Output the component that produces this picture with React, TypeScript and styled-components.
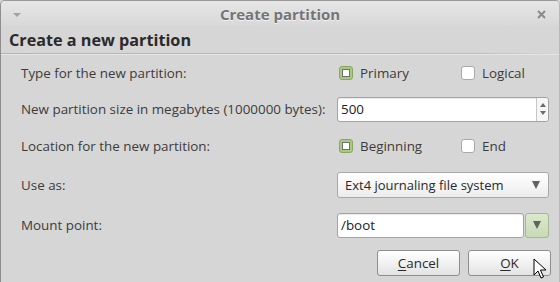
import React from 'react';
import styled, { createGlobalStyle } from 'styled-components';

const GlobalStyle = createGlobalStyle`
  html, body {
    margin: 0;
    padding: 0;
    background: #d6d6d6;
  }
  body {
    font-family: 'Open Sans', 'DejaVu Sans', sans-serif;
  }
`;

const Window = styled.div`
  position: relative;
  width: 560px;
  height: 282px;
  box-sizing: border-box;
  background: #d6d6d6;
  border-left: 1px solid #8e8e8e;
  border-top: 1px solid #9a9a9a;
  border-right: 1px solid #b8b8b8;
  border-radius: 5px 5px 0 0;
  display: flex;
  flex-direction: column;
  overflow: hidden;
  color: #3c3c3c;
  font-size: 13px;
`;

const TitleBar = styled.div`
  height: 25px;
  flex: none;
  display: flex;
  align-items: center;
  padding: 0 12px 0 12px;
  background: linear-gradient(#e6e6e6, #d8d8d8);
`;

const MenuArrow = styled.span`
  width: 0;
  height: 0;
  margin-top: 3px;
  border-left: 4px solid transparent;
  border-right: 4px solid transparent;
  border-top: 4px solid #a2a2a2;
`;

const Title = styled.div`
  flex: 1;
  text-align: center;
  font-weight: bold;
  font-size: 15px;
  color: #747474;
  text-shadow: 0 1px 0 #f4f4f4;
  padding-left: 2px;
`;

const CloseIcon = styled.svg`
  margin-right: 1px;
  margin-top: 1px;
`;

const Heading = styled.div`
  padding: 3px 0 0 8px;
  height: 24px;
  font-size: 16.2px;
  font-weight: bold;
  color: #2a2a2a;
`;

const Separator = styled.div`
  height: 1px;
  background: linear-gradient(90deg, #b4b4b4, #bdbdbd 85%, #d6d6d6);
  border-bottom: 1px solid #e6e6e6;
`;

const Form = styled.div`
  display: grid;
  grid-template-columns: 316px 212px;
  padding-left: 20px;
`;

const Label = styled.div<{ $h: number }>`
  height: ${({ $h }) => $h}px;
  display: flex;
  align-items: center;
  white-space: nowrap;
  font-size: 13.4px;
`;

const Cell = styled.div<{ $h: number }>`
  height: ${({ $h }) => $h}px;
  display: flex;
  align-items: center;
`;

const RadioGroup = styled.div`
  display: flex;
  align-items: center;
  padding-left: 2px;
`;

const Option = styled.label`
  display: flex;
  align-items: center;
  gap: 7px;
  width: 122px;
  font-size: 13.4px;
`;

const Check = styled.span<{ $on?: boolean }>`
  width: 14px;
  height: 14px;
  box-sizing: border-box;
  border-radius: 3px;
  border: 1px solid ${({ $on }) => ($on ? '#87a85f' : '#a9a9a9')};
  background: ${({ $on }) => ($on ? '#a9c983' : '#ffffff')};
  display: flex;
  align-items: center;
  justify-content: center;
  &::after {
    content: '';
    display: ${({ $on }) => ($on ? 'block' : 'none')};
    width: 6px;
    height: 6px;
    background: #fff;
    border: 1px solid #6f6f6f;
  }
`;

const Entry = styled.div<{ $w?: number }>`
  box-sizing: border-box;
  width: ${({ $w }) => ($w ? `${$w}px` : '100%')};
  height: 25px;
  display: flex;
  align-items: center;
  background: #fff;
  border: 1px solid #a3a3a3;
  border-radius: 3px;
  padding-left: 3px;
  color: #222;
  font-size: 13.4px;
  box-shadow: inset 0 1px 1px rgba(0, 0, 0, 0.08);
`;

const EntryText = styled.span`
  flex: 1;
`;

const SpinBox = styled.div`
  width: 11px;
  height: 100%;
  border-left: 1px solid #c6c6c6;
  display: flex;
  flex-direction: column;
  align-items: center;
  justify-content: center;
  gap: 4px;
  background: #f6f6f6;
  border-radius: 0 3px 3px 0;
`;

const Tri = styled.span<{ $up?: boolean }>`
  width: 0;
  height: 0;
  border-left: 3px solid transparent;
  border-right: 3px solid transparent;
  ${({ $up }) => ($up ? 'border-bottom: 4px solid #6a6a6a;' : 'border-top: 4px solid #6a6a6a;')}
`;

const Combo = styled.div`
  box-sizing: border-box;
  width: 100%;
  height: 26px;
  display: flex;
  align-items: center;
  justify-content: space-between;
  padding: 0 8px 0 7px;
  border: 1px solid #a8a8a8;
  border-radius: 3px;
  background: linear-gradient(#ffffff, #f4f4f4 60%, #ececec);
  color: #2a2a2a;
`;

const BigTri = styled.span`
  width: 0;
  height: 0;
  border-left: 4px solid transparent;
  border-right: 4px solid transparent;
  border-top: 8px solid #626262;
`;

const ComboEntry = styled.div`
  width: 100%;
  display: flex;
  align-items: center;
  gap: 1px;
`;

const ComboButton = styled.div`
  box-sizing: border-box;
  width: 24px;
  height: 25px;
  flex: none;
  display: flex;
  align-items: center;
  justify-content: center;
  border: 1px solid #a3b893;
  border-radius: 3px;
  background: linear-gradient(#dbe8cd, #c9dab6);
`;

const ButtonRow = styled.div`
  display: flex;
  justify-content: flex-end;
  gap: 8px;
  padding: 5px 8px 0 0;
`;

const Button = styled.button`
  box-sizing: border-box;
  width: 83px;
  height: 26px;
  border: 1px solid #8e8e8e;
  border-radius: 3px;
  background: linear-gradient(#ffffff, #f0f0f0 55%, #e2e2e2);
  font-family: inherit;
  font-size: 13.4px;
  color: #2a2a2a;
  padding: 0;
  u {
    text-decoration: underline;
    text-underline-offset: 2px;
  }
`;

const Cursor = styled.svg`
  position: absolute;
  left: 532px;
  top: 257px;
`;

const rows = [36, 36, 38, 40, 40];

export default function App() {
  return (
    <>
      <GlobalStyle />
      <Window>
        <TitleBar>
          <MenuArrow />
          <Title>Create partition</Title>
          <CloseIcon width="9" height="9" viewBox="0 0 9 9">
            <path d="M1 1 L8 8 M8 1 L1 8" stroke="#8a8a8a" strokeWidth="2" />
          </CloseIcon>
        </TitleBar>
        <Heading>Create a new partition</Heading>
        <Separator />
        <Form>
          <Label $h={rows[0]}>Type for the new partition:</Label>
          <Cell $h={rows[0]}>
            <RadioGroup>
              <Option>
                <Check $on />
                Primary
              </Option>
              <Option>
                <Check />
                Logical
              </Option>
            </RadioGroup>
          </Cell>

          <Label $h={rows[1]}>New partition size in megabytes (1000000 bytes):</Label>
          <Cell $h={rows[1]}>
            <Entry>
              <EntryText>500</EntryText>
              <SpinBox>
                <Tri $up />
                <Tri />
              </SpinBox>
            </Entry>
          </Cell>

          <Label $h={rows[2]}>Location for the new partition:</Label>
          <Cell $h={rows[2]}>
            <RadioGroup>
              <Option>
                <Check $on />
                Beginning
              </Option>
              <Option>
                <Check />
                End
              </Option>
            </RadioGroup>
          </Cell>

          <Label $h={rows[3]}>Use as:</Label>
          <Cell $h={rows[3]}>
            <Combo>
              <span>Ext4 journaling file system</span>
              <BigTri />
            </Combo>
          </Cell>

          <Label $h={rows[4]}>Mount point:</Label>
          <Cell $h={rows[4]}>
            <ComboEntry>
              <Entry $w={187}>
                <EntryText>/boot</EntryText>
              </Entry>
              <ComboButton>
                <BigTri />
              </ComboButton>
            </ComboEntry>
          </Cell>
        </Form>
        <ButtonRow>
          <Button>
            <u>C</u>ancel
          </Button>
          <Button>
            <u>O</u>K
          </Button>
        </ButtonRow>
        <Cursor width="14" height="22" viewBox="0 0 14 22">
          <path
            d="M1 1 L1 17 L5 13 L8 20 L10.5 19 L7.5 12 L13 12 Z"
            fill="#fff"
            stroke="#000"
            strokeWidth="1"
            strokeLinejoin="round"
          />
        </Cursor>
      </Window>
    </>
  );
}
